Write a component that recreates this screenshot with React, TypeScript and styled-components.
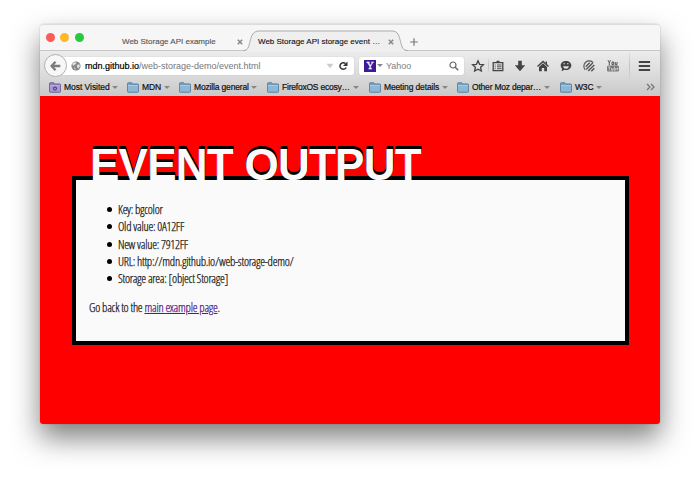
import React from "react";
import styled, { createGlobalStyle } from "styled-components";

const Global = createGlobalStyle`
  * { box-sizing: border-box; }
  html, body { margin: 0; background: #fff; overflow: hidden; }
  body { font-family: "Liberation Sans", Arial, sans-serif; }
`;

const Desktop = styled.main`
  width: 700px;
  height: 482px;
  padding: 24px 40px 0;
  overflow: hidden;
`;

const BrowserWindow = styled.section`
  width: 620px;
  height: 400px;
  display: flex;
  flex-direction: column;
  border-radius: 4px 4px 3px 3px;
  overflow: hidden;
  background: #f6f6f6;
  box-shadow: 0 0 1px rgba(0, 0, 0, 0.5), 0 14px 28px rgba(0, 0, 0, 0.5);
`;

const TabStrip = styled.header`
  height: 27px;
  flex: none;
  display: flex;
  align-items: flex-start;
  background: #f6f6f6;
  border-top: 1px solid #dcdcdc;
  box-shadow: inset 0 -1px #c8c8c8;
`;

const Lights = styled.div`
  display: flex;
  gap: 5.4px;
  padding: 7.5px 0 0 6px;
  width: 82px;
`;

const Light = styled.i<{ $color: string }>`
  width: 9px;
  height: 9px;
  border-radius: 50%;
  background: ${(p) => p.$color};
`;

const InactiveTab = styled.div`
  width: 121px;
  height: 26px;
  padding-top: 7px;
  display: flex;
  align-items: center;
  color: #555;
`;

const TabTitle = styled.span<{ $width: number }>`
  width: ${(p) => p.$width}px;
  flex: none;
  font-size: 8px;
  -webkit-text-stroke: 0.12px currentColor;
  white-space: nowrap;
`;

const ActiveTab = styled.div`
  position: relative;
  width: 165px;
  height: 26px;
  padding: 7px 0 0 15px;
  display: flex;
  align-items: center;
  color: #111;
`;

const TabOutline = styled.svg`
  position: absolute;
  left: 0;
  top: 0;
`;

const TabContent = styled.div`
  position: relative;
  display: flex;
  align-items: center;
`;

const PlusIcon = styled.svg`
  margin: 13px 0 0 2px;
`;

const Toolbars = styled.div`
  height: 45px;
  flex: none;
  background: linear-gradient(#ececec, #dedede 45%, #c9c9c9);
`;

const NavBar = styled.nav`
  height: 29px;
  display: flex;
  align-items: center;
  padding-left: 4px;
`;

const BackButton = styled.button`
  position: relative;
  z-index: 1;
  width: 23px;
  height: 23px;
  flex: none;
  padding: 0;
  border: 1px solid #b0b0b0;
  border-radius: 50%;
  background: #f7f7f7;
  display: grid;
  place-items: center;
`;

const Field = styled.div<{ $width: number; $inset: number }>`
  width: ${(p) => p.$width}px;
  height: 18px;
  flex: none;
  display: flex;
  align-items: center;
  padding-left: ${(p) => p.$inset}px;
  background: #fff;
  border-radius: 2px;
  box-shadow: 0 0 1px rgba(0, 0, 0, 0.25);
`;

const AddressField = styled(Field)`
  margin-left: -6px;
`;

const SearchField = styled(Field)`
  margin-left: 5px;
`;

const Address = styled.span`
  width: 237px;
  margin-left: 4px;
  font-size: 9px;
  color: #777;
  white-space: nowrap;
  b { font-weight: 400; color: #000; -webkit-text-stroke: 0.2px #000; }
`;

const YahooBadge = styled.span`
  width: 12px;
  height: 12px;
  display: grid;
  place-items: center;
  background: #3d1a96;
  color: #fff;
  font: 10px/12px "Liberation Serif", Times, serif;
  -webkit-text-stroke: 0.3px #fff;
`;

const SearchName = styled.span`
  width: 63px;
  margin-left: 3px;
  font-size: 9px;
  color: #808080;
`;

const Caret = styled.i`
  flex: none;
  border: 2.5px solid transparent;
  border-left-width: 3px;
  border-right-width: 3px;
  border-top: 3px solid #858585;
  border-bottom: 0;
  margin-left: 1px;
`;

const Tools = styled.div`
  display: flex;
  align-items: center;
  margin-left: 8px;
`;

const Tool = styled.svg<{ $gap?: number }>`
  flex: none;
  width: 12px;
  height: 12px;
  margin-right: ${(p) => p.$gap ?? 11}px;
  overflow: visible;
`;

const Divider = styled.i<{ $gap: number; $height: number }>`
  width: 1px;
  height: ${(p) => p.$height}px;
  margin-right: ${(p) => p.$gap}px;
  background: linear-gradient(rgba(180, 180, 180, 0.2), #c2c2c2, rgba(180, 180, 180, 0.2));
`;

const BookmarkBar = styled.div`
  height: 14px;
  display: flex;
  align-items: center;
  padding-left: 9px;
`;

const BookmarkItem = styled.div<{ $width: number }>`
  width: ${(p) => p.$width}px;
  flex: none;
  display: flex;
  align-items: center;
  svg { flex: none; }
`;

const BookmarkLabel = styled.span<{ $width: number; $spacing: number }>`
  width: ${(p) => p.$width}px;
  margin: 0 1px 0 3px;
  flex: none;
  color: #111;
  -webkit-text-stroke: 0.2px #111;
  font-size: 8.5px;
  line-height: 12px;
  letter-spacing: ${(p) => p.$spacing}px;
  white-space: nowrap;
`;

const Page = styled.article`
  flex: 1;
  padding: 42px 31px 0 32px;
  background: #f00;
`;

const Heading = styled.h1`
  margin: 0;
  padding: 2px 0 0 18px;
  height: 38px;
  position: relative;
  font: 700 44px/50px "Liberation Sans", Arial, sans-serif;
  letter-spacing: -0.75px;
  font-kerning: none;
  color: #fafafa;
  text-shadow: 0 -3px 0 #000, 0 -2px 0 #000, 0 -1px 0 #000;
  white-space: nowrap;
`;

const Panel = styled.div`
  width: 557px;
  height: 169px;
  padding: 21px 13px 0;
  border: 4px solid #000;
  background: #fafafa;
  color: #1c1c1c;
  font-family: "Open Sans Condensed Light", "Open Sans Condensed", "Open Sans", sans-serif;
  font-weight: 300;
  -webkit-text-stroke: 0.25px currentColor;
  font-size: 12.3px;
  letter-spacing: -0.27px;
  line-height: 17.25px;
`;

const Entries = styled.ul`
  margin: 0;
  padding: 0;
  list-style: none;
`;

const Entry = styled.li`
  height: 17.25px;
  display: flex;
  align-items: center;
  white-space: nowrap;
  &::before {
    content: "";
    width: 5px;
    height: 5px;
    margin: 0 6px 0 18px;
    border-radius: 50%;
    background: #000;
  }
`;

const Back = styled.p`
  margin: 12px 0 0;
  a { color: #551a8b; }
`;

const Close = () => (
  <svg width="6" height="6" viewBox="0 0 6 6">
    <path d="M.8.8l4.4 4.4M5.2.8L.8 5.2" stroke="#888" strokeWidth="1.5" />
  </svg>
);

const Folder = ({ smart = false }: { smart?: boolean }) => (
  <svg width="12" height="11" viewBox="0 0 12 11">
    <path
      d="M.5 9.5v-8q0-.8.8-.8h3.4l1 1.2h5q.8 0 .8.8v6.8q0 .8-.8.8H1.3q-.8 0-.8-.8z"
      fill={smart ? "#8f80bd" : "#6f9fc4"}
      stroke={smart ? "#67579b" : "#507b9d"}
      strokeWidth=".8"
    />
    <path d="M1 4h10v5.6H1z" fill={smart ? "#a79ad0" : "#8fb6d3"} />
    <path d="M1 3.5h10" stroke={smart ? "#c3b8e2" : "#b9d5e8"} strokeWidth=".8" />
    {smart && <circle cx="6" cy="6.6" r="1.5" fill="none" stroke="#56458e" strokeWidth="1.2" />}
  </svg>
);

const bookmarks = [
  { label: "Most Visited", item: 78, text: 46, spacing: -0.04 },
  { label: "MDN", item: 52, text: 20, spacing: -0.1 },
  { label: "Mozilla general", item: 88, text: 55, spacing: -0.16 },
  { label: "FirefoxOS ecosy…", item: 102, text: 69, spacing: -0.22 },
  { label: "Meeting details", item: 88, text: 56, spacing: -0.14 },
  { label: "Other Moz depar…", item: 103, text: 70, spacing: -0.2 },
  { label: "W3C", item: 86, text: 18.5, spacing: -0.15 },
];

export default function App() {
  return (
    <Desktop>
      <Global />
      <BrowserWindow>
        <TabStrip>
          <Lights>
            <Light $color="#fc5b57" />
            <Light $color="#fdb827" />
            <Light $color="#28c840" />
          </Lights>
          <InactiveTab>
            <TabTitle $width={115}>Web Storage API example</TabTitle>
            <Close />
          </InactiveTab>
          <ActiveTab>
            <TabOutline width="170" height="27" viewBox="0 0 170 27">
              <path
                d="M0 26.5c5 0 5.5-4 7-10 1.500-6 3-10.500 9-10.500H149c6 0 7 4.500 8.500 10.500 1.500 6 2.500 10 7.500 10z"
                fill="#efefef"
              />
              <path
                d="M0 25.500c5 0 5.500-3 7-9 1.500-6 3-10.500 9-10.500H149c6 0 7 4.500 8.500 10.500 1.500 6 2.500 9 7.500 9"
                fill="none"
                stroke="#aaa"
              />
            </TabOutline>
            <TabContent>
              <TabTitle $width={129.5}>Web Storage API storage event …</TabTitle>
              <Close />
            </TabContent>
          </ActiveTab>
          <PlusIcon width="8" height="8" viewBox="0 0 8 8">
            <path d="M4 .2v7.600M.2 4h7.600" stroke="#777" strokeWidth="1.200" />
          </PlusIcon>
        </TabStrip>
        <Toolbars>
          <NavBar>
            <BackButton aria-label="Back">
              <svg width="11" height="10" viewBox="0 0 11 10">
                <path d="M5.500 .8L1.500 5l4 4.200M1.500 5H10.300" fill="none" stroke="#7c7c7c" strokeWidth="2.300" />
              </svg>
            </BackButton>
            <AddressField $width={293} $inset={10}>
              <svg width="10" height="10" viewBox="0 0 10 10">
                <circle cx="5" cy="5" r="4.600" fill="#858585" />
                <path d="M1.200 2.500L4 1l1.500 1.200L4 3.800l-1.400.4-.4 1.300zM5.800 4l2.600-.8.600 2-1.800 2.600-1-1.500zM2.600 6.300l2 .6-.5 1.900z" fill="#dedede" />
              </svg>
              <Address><b>mdn.github.io</b>/web-storage-demo/event.html</Address>
              <svg width="27" height="10" viewBox="0 0 27 10">
                <path d="M4.500 2.800h7L8 7.200z" fill="#ccc" />
                <path d="M23.500 2.500A3.300 3.300 0 1 0 24.200 6.500" fill="none" stroke="#333" strokeWidth="1.500" />
                <path d="M25.500 .5v4.500h-4.500z" fill="#333" />
              </svg>
            </AddressField>
            <SearchField $width={105} $inset={5}>
              <YahooBadge>Y</YahooBadge>
              <Caret />
              <SearchName>Yahoo</SearchName>
              <svg width="10" height="10" viewBox="0 0 10 10">
                <circle cx="4" cy="4" r="3" fill="none" stroke="#666" strokeWidth="1.200" />
                <path d="M6.200 6.200l3 3" stroke="#666" strokeWidth="1.500" />
              </svg>
            </SearchField>
            <Tools>
              <Tool $gap={4} viewBox="0 0 12 12">
                <path d="M6 .8l1.600 3.500 3.800.4-2.800 2.600.8 3.800L6 9.200l-3.400 1.900.8-3.800L.6 4.700l3.800-.4z" fill="none" stroke="#444" strokeWidth="1.300" />
              </Tool>
              <Divider $gap={3} $height={13} />
              <Tool $gap={10} viewBox="0 0 12 12">
                <path d="M1.200 2.700h9.600v8H1.200z" fill="none" stroke="#444" strokeWidth="1.300" />
                <path d="M4 2.500l.8-1.700h2.400L8 2.500z" fill="#444" />
                <path d="M2.700 5h1M5 5h4.500M2.700 6.800h1M5 6.800h4.500M2.700 8.700h1M5 8.700h4.500" stroke="#444" strokeWidth=".9" />
              </Tool>
              <Tool viewBox="0 0 12 12"><path d="M4.200 .7h3.600v4.500H11.200L6 11.200.8 5.200h3.400z" fill="#444" /></Tool>
              <Tool viewBox="0 0 12 12">
                <path d="M.5 6.500L6 1.500l5.500 5" fill="none" stroke="#444" strokeWidth="1.400" />
                <path d="M2 7L6 3.300 10 7v4.200H7.200V8H4.800v3.200H2zM8.500 1.500h1.500v3L8.500 3z" fill="#444" />
              </Tool>
              <Tool viewBox="0 0 12 12">
                <path d="M6 1c3.200 0 5.300 1.900 5.300 4.500S9.200 10 6 10q-1 0-1.800-.2Q3 11 1.300 11q.9-.9.800-2.300Q.7 7.500.7 5.500C.7 2.900 2.800 1 6 1z" fill="#444" />
                <path d="M3 6.200h6Q8.500 8.700 6 8.700T3 6.200z" fill="#e4e4e4" />
                <path d="M3.500 3.800H5M7 3.800h1.500" stroke="#e4e4e4" strokeWidth="1.100" />
              </Tool>
              <Tool $gap={12} viewBox="0 0 12 12">
                <path d="M2.200 9.800A5.300 5.300 0 1 1 10.200 2.700" fill="none" stroke="#555" strokeWidth="1.100" />
                <path d="M2.700 6.700l4-4M3.200 9.500l6.500-6.500M5.200 11L11.300 4.900M8.300 11.200l3-3" stroke="#555" strokeWidth="1.400" />
              </Tool>
              <Tool $gap={10} viewBox="0 0 12 12">
                <path d="M1 .2l1.300 2.500V5M3.500.2L2.300 2.700M5 2h1.700v2.600H5zM8.300 2v2.700H10V2" fill="none" stroke="#555" />
                <rect y="5.500" width="12" height="6" rx="1.500" fill="#777" />
                <path d="M1 7h2.500M2.300 7v3.500M4.500 8v2.300H6V8M7.300 6.500v3.800h1V8M10 10.300V8h1v1h-1" fill="none" stroke="#d8d8d8" strokeWidth=".8" />
              </Tool>
              <Divider $gap={9} $height={26} />
              <Tool $gap={0} viewBox="0 0 12 12"><path d="M-.2 2h11.300M-.2 6h11.300M-.2 10h11.300" stroke="#444" strokeWidth="2" /></Tool>
            </Tools>
          </NavBar>
          <BookmarkBar>
            {bookmarks.map((b, i) => (
              <BookmarkItem key={b.label} $width={b.item}>
                <Folder smart={i === 0} />
                <BookmarkLabel $width={b.text} $spacing={b.spacing}>{b.label}</BookmarkLabel>
                <Caret />
              </BookmarkItem>
            ))}
            <svg width="10" height="8" viewBox="0 0 10 8">
              <path d="M1 1l3 3-3 3M5 1l3 3-3 3" fill="none" stroke="#777" strokeWidth="1.300" />
            </svg>
          </BookmarkBar>
        </Toolbars>
        <Page>
          <Heading>EVENT OUTPUT</Heading>
          <Panel>
            <Entries>
              <Entry>Key: bgcolor</Entry>
              <Entry>Old value: 0A12FF</Entry>
              <Entry>New value: 7912FF</Entry>
              <Entry>URL: http://mdn.github.io/web-storage-demo/</Entry>
              <Entry>Storage area: [object Storage]</Entry>
            </Entries>
            <Back>Go back to the <a href="#main">main example page</a>.</Back>
          </Panel>
        </Page>
      </BrowserWindow>
    </Desktop>
  );
}
